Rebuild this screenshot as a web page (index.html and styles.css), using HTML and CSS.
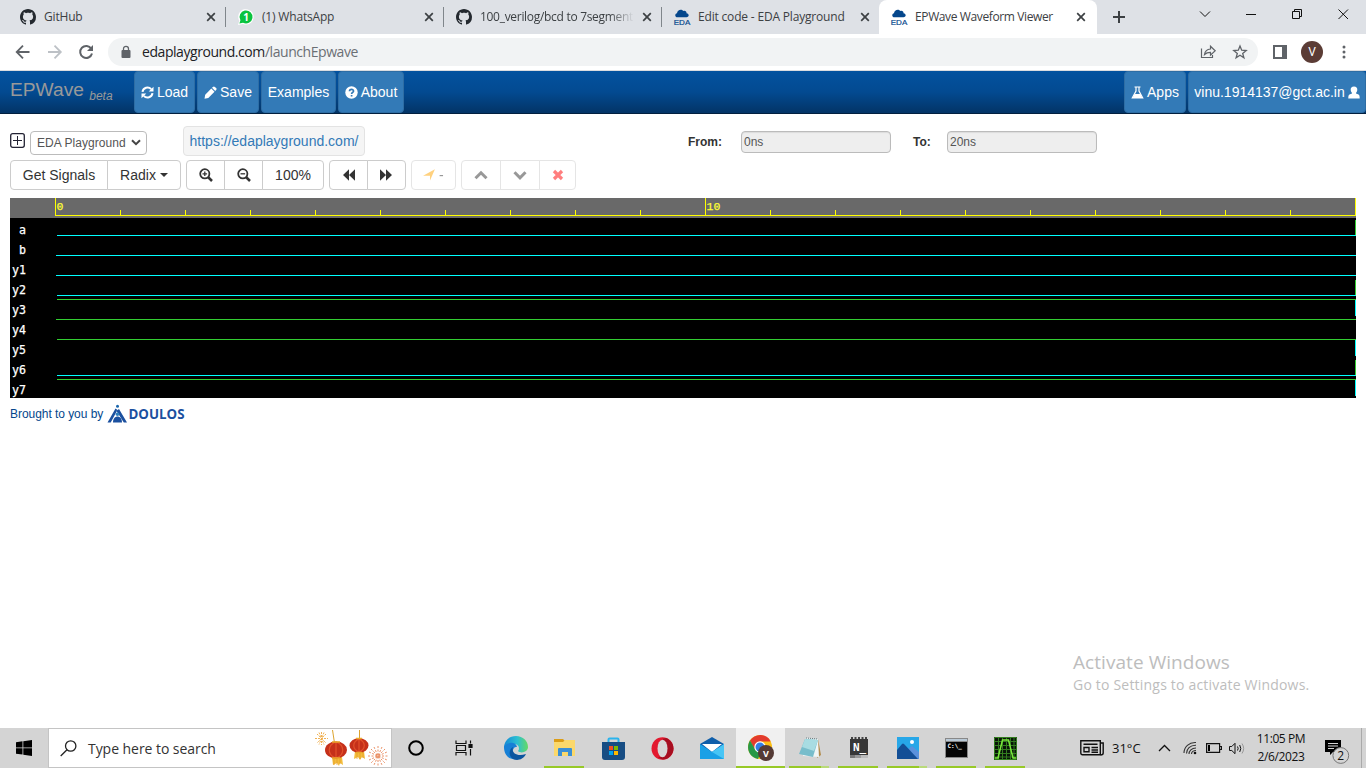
FILE: index.html
```html
<!DOCTYPE html>
<html lang="en">
<head>
<meta charset="utf-8">
<title>EPWave Waveform Viewer</title>
<link rel="stylesheet" href="styles.css">
</head>
<body>
<svg class="defs" width="0" height="0">
  <symbol id="github" viewBox="0 0 16 16"><path fill="#24292f" d="M8 0C3.58 0 0 3.58 0 8c0 3.54 2.29 6.53 5.47 7.59.4.07.55-.17.55-.38 0-.19-.01-.82-.01-1.49-2.01.37-2.53-.49-2.69-.94-.09-.23-.48-.94-.82-1.13-.28-.15-.68-.52-.01-.53.63-.01 1.08.58 1.23.82.72 1.21 1.87.87 2.33.66.07-.52.28-.87.51-1.07-1.78-.2-3.64-.89-3.64-3.95 0-.87.31-1.59.82-2.15-.08-.2-.36-1.02.08-2.12 0 0 .67-.21 2.2.82.64-.18 1.32-.27 2-.27.68 0 1.36.09 2 .27 1.53-1.04 2.2-.82 2.2-.82.44 1.1.16 1.92.08 2.12.51.56.82 1.27.82 2.15 0 3.07-1.87 3.75-3.65 3.95.29.25.54.73.54 1.48 0 1.07-.01 1.93-.01 2.2 0 .21.15.46.55.38A8.013 8.013 0 0016 8c0-4.42-3.58-8-8-8z"/></symbol>
  <symbol id="cloud" viewBox="0 0 16 16"><path fill="#05478c" d="M3.500 8.300C.8 8.300.4 4.800 3 4.200 3.300.9 7.400-.5 9.300 2c2.400-.7 3.400 1 3.200 2.200 3 .3 2.800 4.100 0 4.100z"/></symbol>
  <symbol id="x" viewBox="0 0 10 10"><path d="M1.200 1.200l7.600 7.600M8.800 1.200l-7.600 7.600" fill="none" stroke="#3c4043" stroke-width="1.700"/></symbol>
</svg>
<header class="browser">
  <div class="tabs">
    <div class="tab"><svg class="fav"><use href="#github"/></svg><span>GitHub</span><svg class="close"><use href="#x"/></svg></div>
    <div class="tab"><svg class="fav" viewBox="0 0 16 16"><path d="M0 16l1.300-4.200A7.700 7.700 0 1 1 5 15z" fill="#fff"/><path d="M1.400 14.600l1-3.400A6.500 6.500 0 1 1 5 13.700z" fill="#0ac33f"/><text x="8.100" y="11.800" text-anchor="middle" class="wa-num">1</text></svg><span>(1) WhatsApp</span><svg class="close"><use href="#x"/></svg></div>
    <div class="tab"><svg class="fav"><use href="#github"/></svg><span class="fade">100_verilog/bcd to 7segment</span><svg class="close"><use href="#x"/></svg></div>
    <div class="tab last"><svg class="fav"><use href="#cloud"/><text x="8" y="16" text-anchor="middle" class="eda-text">EDA</text></svg><span>Edit code - EDA Playground</span><svg class="close"><use href="#x"/></svg></div>
    <div class="tab active"><svg class="fav"><use href="#cloud"/><text x="8" y="16" text-anchor="middle" class="eda-text">EDA</text></svg><span>EPWave Waveform Viewer</span><svg class="close"><use href="#x"/></svg></div>
    <svg class="newtab" viewBox="0 0 12 12"><path d="M6 0v12M0 6h12" stroke="#3c4043" stroke-width="2"/></svg>
    <svg class="winctl" width="150" height="14" viewBox="0 0 150 14" fill="none" stroke="#111" stroke-width="1"><path d="M1 4.500l5 5 5-5M47 7.500h10M93.500 4.500h7v7h-7zM95.500 4.500v-2h7v7h-2M139.500 2.500l9.500 9.500M149 2.500L139.500 12"/></svg>
  </div>
  <div class="toolbar">
    <svg class="navicons" width="80" height="16" viewBox="0 0 80 16" fill="none" stroke-width="1.800"><path d="M14.500 8H2M8 1.700L1.700 8 8 14.300" stroke="#5f6368"/><path d="M33 8h12.500M39.500 1.700L45.800 8l-6.300 6.300" stroke="#bdc1c6"/><path d="M76.300 4.800A6 6 0 1 0 77 9.500" stroke="#5f6368" stroke-width="2"/><path d="M78 1v6h-6z" fill="#5f6368"/></svg>
    <div class="omnibox">
      <svg width="10" height="14" viewBox="0 0 10 14"><rect x=".5" y="5" width="9" height="8" rx="1" fill="#5f6368"/><path d="M2.500 5.500V3.800a2.500 2.500 0 0 1 5 0v1.700" fill="none" stroke="#5f6368" stroke-width="1.300"/></svg>
      <span class="url">edaplayground.com<i>/launchEpwave</i></span>
      <svg class="omni-end" width="48" height="16" viewBox="0 0 48 16" fill="none" stroke="#5f6368" stroke-width="1.300"><path d="M1.500 4.500v9h11V11M4.500 10.500c.5-3.500 2.500-5.300 6-5.500V2.200l4.700 4.600-4.700 4.400V8.300c-3 0-4.500.7-6 2.200z" stroke-width="1.200"/><path d="M40 2l1.700 4.200 4.500.3-3.500 2.900 1.200 4.400L40 11.300l-3.900 2.500 1.200-4.400-3.500-2.900 4.500-.3z"/></svg>
    </div>
    <svg class="panel" width="14" height="14" viewBox="0 0 14 14"><path fill="#5f6368" d="M0 0h14v14H0z"/><path fill="#fff" d="M2 2h7v10H2z"/></svg>
    <span class="avatar">V</span>
    <svg width="4" height="14" viewBox="0 0 4 14" fill="#5f6368"><circle cx="2" cy="2" r="1.500"/><circle cx="2" cy="7" r="1.500"/><circle cx="2" cy="12" r="1.500"/></svg>
  </div>
</header>
<nav class="appnav">
  <span class="brand">EPWave <em>beta</em></span>
  <button class="load"><svg width="13" height="13" viewBox="0 0 13 13" fill="none" stroke="#fff" stroke-width="2"><path d="M1.500 5.800a5 5 0 0 1 8.700-2.600M11.500 7.200a5 5 0 0 1-8.700 2.600"/><path d="M12.500.7v4.800H7.700zM.5 12.300V7.500h4.800z" fill="#fff" stroke="none"/></svg>Load</button>
  <button class="save"><svg width="13" height="13" viewBox="0 0 13 13" fill="#fff"><path d="M8.900.9c.7-.7 1.300-.7 2 0l1.200 1.200c.7.700.7 1.300 0 2l-.9.900-3.200-3.200zM7.300 2.500l3.200 3.200-6.200 6.200-3.800.8.700-3.900z"/></svg>Save</button>
  <button class="examples">Examples</button>
  <button class="about"><svg width="13" height="13" viewBox="0 0 13 13"><circle cx="6.500" cy="6.500" r="6.200" fill="#fff"/><path d="M4.500 5.200c0-2.700 4.200-2.400 4 0-.1 1.200-1.900 1.300-1.900 2.800M6.600 9v1.600" stroke="#337ab7" stroke-width="1.700" fill="none"/></svg>About</button>
  <button class="apps"><svg width="13" height="13" viewBox="0 0 13 13" fill="none" stroke="#fff" stroke-width="1.200"><path d="M3.500 1h6M5 1v4L1.300 11.800h10.400L8 5V1"/><path d="M3.500 8h6l2 4h-10z" fill="#fff" stroke="none"/></svg>Apps</button>
  <button class="user">vinu.1914137@gct.ac.in<svg width="12" height="13" viewBox="0 0 12 13" fill="#fff"><path d="M6 .5c2.300 0 3.500 1.500 3.300 3.500-.1 1.200-.7 2.200-1.300 2.900v.5l2.500 1c.9.400 1.200 1.300 1.200 4.100H.3c0-2.800.3-3.700 1.200-4.100l2.500-1v-.5C3.400 6.200 2.800 5.200 2.700 4 2.500 2 3.700.5 6 .5z"/></svg></button>
</nav>
<main class="page">
  <div class="source">
    <svg class="plus" width="15" height="15" viewBox="0 0 15 15" fill="none" stroke="#223"><rect x=".7" y=".7" width="13.600" height="13.600" rx="2" stroke-width="1.300"/><path d="M7.500 3v9M3 7.500h9"/></svg>
    <div class="select"><span>EDA Playground</span><svg width="10" height="7" viewBox="0 0 10 7"><path d="M1 1.200l4 4 4-4" fill="none" stroke="#444" stroke-width="2"/></svg></div>
    <a class="link">https://edaplayground.com/</a>
    <label class="from">From:</label><div class="field">0ns</div>
    <label class="to">To:</label><div class="field">20ns</div>
  </div>
  <div class="controls">
    <div class="group"><button class="w98">Get Signals</button><button class="w74">Radix<i class="caret"></i></button></div>
    <div class="group"><button class="w39"><svg width="14" height="14" viewBox="0 0 14 14" fill="none" stroke="#333" stroke-width="1.800"><circle cx="5.800" cy="5.800" r="4.600"/><path d="M9 9l4 4" stroke-width="2.500"/><path d="M5.800 3.500v4.600M3.500 5.800h4.600" stroke-width="1.300"/></svg></button><button class="w39"><svg width="14" height="14" viewBox="0 0 14 14" fill="none" stroke="#333" stroke-width="1.800"><circle cx="5.800" cy="5.800" r="4.600"/><path d="M9 9l4 4" stroke-width="2.500"/><path d="M3.500 5.800h4.600" stroke-width="1.300"/></svg></button><button class="w62">100%</button></div>
    <div class="group"><button class="w39"><svg width="12" height="12" viewBox="0 0 12 12" fill="#333"><path d="M6 .3v11.400L0 6zM12 .3v11.400L6 6z"/></svg></button><button class="w39 fwd"><svg width="12" height="12" viewBox="0 0 12 12" fill="#333"><path d="M0 .3v11.400L6 6zM6 .3v11.400L12 6z"/></svg></button></div>
    <div class="group dim"><button class="w45"><svg width="12" height="12" viewBox="0 0 12 12"><path fill="orange" d="M11.900.2L7 11.500V6.800H.1z"/></svg>&nbsp;-</button></div>
    <div class="group dim"><button class="w40"><svg width="14" height="12" viewBox="0 0 14 12"><path d="M1.500 9.300L7 3.800l5.500 5.500" fill="none" stroke="#333" stroke-width="3"/></svg></button><button class="w40"><svg width="14" height="12" viewBox="0 0 14 12"><path d="M1.500 3.300L7 8.800l5.500-5.500" fill="none" stroke="#333" stroke-width="3"/></svg></button><button class="w37"><svg width="12" height="12" viewBox="0 0 12 12"><path d="M2 2l8 8M10 2l-8 8" stroke="red" stroke-width="3.200"/></svg></button></div>
  </div>
  <section class="waves">
    <div class="row ruler"><span class="name"></span>
      <svg width="1301" height="20" viewBox="0 0 1301 20"><path class="tick" d="M.5 0v18M0 17.500h1301M650.500 0v17M1300.500 0v17M65.500 12v5M130.500 12v5M195.500 12v5M260.500 12v5M325.500 12v5M390.500 12v5M455.500 12v5M520.500 12v5M585.500 12v5M715.500 12v5M780.500 12v5M845.500 12v5M910.500 12v5M975.500 12v5M1040.500 12v5M1105.500 12v5M1170.500 12v5M1235.500 12v5"/><text x="1.500" y="12">0</text><text x="651.500" y="12">10</text></svg></div>
    <div class="row"><span class="name">a</span><svg width="1301" height="20"><path class="lo" d="M2 17.500h1299"/><path class="hi" d="M1300.500 2v15"/></svg></div>
    <div class="row"><span class="name">b</span><svg width="1301" height="20"><path class="lo" d="M1 17.500h1300"/></svg></div>
    <div class="row"><span class="name">y1</span><svg width="1301" height="20"><path class="lo" d="M1 17.500h1300"/></svg></div>
    <div class="row"><span class="name">y2</span><svg width="1301" height="20"><path class="lo" d="M2 17.500h1299"/><path class="hi" d="M1300.500 2v15"/></svg></div>
    <div class="row"><span class="name">y3</span><svg width="1301" height="20"><path class="hi" d="M2 1.500h1299"/><path class="lo" d="M1300.500 2v16"/></svg></div>
    <div class="row"><span class="name">y4</span><svg width="1301" height="20"><path class="hi" d="M1 1.500h1300"/></svg></div>
    <div class="row"><span class="name">y5</span><svg width="1301" height="20"><path class="hi" d="M2 1.500h1299"/><path class="lo" d="M1300.500 2v16"/></svg></div>
    <div class="row"><span class="name">y6</span><svg width="1301" height="20"><path class="lo" d="M2 17.500h1299"/><path class="hi" d="M1300.500 2v15"/></svg></div>
    <div class="row"><span class="name">y7</span><svg width="1301" height="20"><path class="hi" d="M2 1.500h1299"/><path class="lo" d="M1300.500 2v16"/></svg></div>
  </section>
  <footer class="credit"><span>Brought to you by</span><svg width="80" height="20" viewBox="0 0 80 20"><path fill="#1b509f" d="M8.500 4.500L.5 18.500h3.200L10.500 6zM12 5l8 13.500h-3.200L9.500 7z"/><circle cx="10.500" cy="2.300" r="1.500" fill="#1b67ad"/><circle cx="10.500" cy="10.300" r="1.800" fill="#2d7fbd"/><path fill="#1b509f" d="M6 18.500c0-8 9-8 9 0z"/><text x="21.500" y="15" class="doulos" textLength="56" lengthAdjust="spacingAndGlyphs">DOULOS</text></svg></footer>
</main>
<aside class="watermark"><p class="wm1">Activate Windows</p><p class="wm2">Go to Settings to activate Windows.</p></aside>
<div class="taskbar">
  <div class="start"><svg width="16" height="16" viewBox="0 0 16 16"><path d="M0 2.200l6.500-.9v6.200H0zM7.300 1.200L16 0v7.500H7.300zM0 8.300h6.500v6.300L0 13.700zM7.300 8.300H16V16l-8.700-1.200z"/></svg></div>
  <div class="search">
    <svg width="17" height="17" viewBox="0 0 17 17" fill="none" stroke="#222" stroke-width="1.300"><circle cx="10.700" cy="6" r="5.200"/><path d="M7 9.700L.7 16"/></svg><span>Type here to search</span>
    <svg class="lanterns" width="74" height="37" viewBox="0 0 74 37">
      <g stroke="#eea943" stroke-width=".9" stroke-dasharray="2 1"><path d="M6.500 2v13M0 8.500h13M2 4l9 9M11 4l-9 9M4 2.500l5 12M9 2.500l-5 12"/></g>
      <g stroke="#e88657" stroke-width=".9" stroke-dasharray="2 1.500"><path d="M63 16v20M53 26h20M56 19l14 14M70 19L56 33M59 17l8 18M67 17l-8 18M54 22l18 8M54 30l18-8"/></g>
      <path d="M17.500 0l2 13M44.500 0v8" stroke="#dca32e"/>
      <path d="M17 27h10l1 8-3-2-1 3-2-3-4 2zM40 21h9l1 8-3-2-2 3-2-3-4 2z" fill="#f3bd3c"/>
      <path d="M19 27v8M22 27v8M25 27v7M42 22v7M45 22v7M48 22v6" stroke="#e49a25" stroke-width=".7"/>
      <ellipse cx="21" cy="20" rx="11" ry="8.500" fill="#c5301a"/><ellipse cx="44" cy="15.500" rx="9.500" ry="7.300" fill="#c5301a"/>
      <path d="M21 12c-9 3-9 13 0 16M21 12c9 3 9 13 0 16M21 12v16M44 9c-7 3-7 10 0 13M44 9c7 3 7 10 0 13M44 9v13" fill="none" stroke="#e2502a" stroke-width="1.200"/>
      <path d="M17 12h8M41 8.500h6M17 28h8M41 22.500h6" stroke="#eaa82c" stroke-width="1.500"/>
    </svg>
  </div>
  <div class="tool"><svg width="16" height="16" viewBox="0 0 16 16"><circle cx="8" cy="8" r="6.800" fill="none" stroke="#000" stroke-width="2"/></svg></div>
  <div class="tool second"><svg width="18" height="16" viewBox="0 0 18 16" fill="none" stroke="#111" stroke-width="1.200"><path d="M1 .5v3h10v-3M1 15.500v-3h10v3M1.500 5.500h9v5h-9zM15.500.5v3M15.500 9v6.500"/><path d="M14 4.500h3v3h-3z" fill="#111"/></svg></div>
  <div class="task"><svg width="24" height="24" viewBox="0 0 24 24"><defs><linearGradient id="eg"><stop stop-color="#1489d5"/><stop offset=".55" stop-color="#2cbfd2"/><stop offset="1" stop-color="#65da63"/></linearGradient></defs><path fill="url(#eg)" d="M0 12C0 5 5 0 12 0c7 0 12 5 12 11 0 5-7 7-10 4 2-2 1-7-4-7-5 0-9 3-10 4z"/><path fill="#1780d6" d="M0 11c2-5 12-6 13 0-4-1-7 6-1 12C5 24 0 19 0 11z"/><path fill="#0c559f" d="M9 11c-2 6 4 10 13 7-3 6-9 7-13 5-5-3-4-10 0-12z"/></svg></div>
  <div class="task open"><svg width="22" height="20" viewBox="0 0 22 20"><path fill="#dc9d16" d="M0 1h9l2 2v4H0z"/><path fill="#fbd86b" d="M0 4h9l2-2h10v16H0z"/><path fill="#3b8fd5" d="M4 18v-7q0-1 1-1h12q1 0 1 1v7h-4v-4H8v4z"/></svg></div>
  <div class="task"><svg width="23" height="23" viewBox="0 0 23 23"><path d="M6.500 6V2.500q0-1 1-1h8q1 0 1 1V6" fill="none" stroke="#2bb4ed" stroke-width="2"/><path fill="#174d83" d="M0 5h23v15q0 3-3 3H3q-3 0-3-3z"/><path fill="#f25022" d="M7 9h4v4H7z"/><path fill="#7fba00" d="M12 9h4v4h-4z"/><path fill="#00a4ef" d="M7 14h4v4H7z"/><path fill="#ffb900" d="M12 14h4v4h-4z"/></svg></div>
  <div class="task"><svg width="23" height="23" viewBox="0 0 23 23"><ellipse cx="11.500" cy="11.500" rx="11" ry="11.300" fill="#e3192f"/><path fill="#a70e20" d="M15 1c10 4 10 17 0 21-3 1-6 0-8-2 12 1 10-15 4-18z"/><ellipse cx="11.500" cy="11.500" rx="5" ry="8.800" fill="#d8d6d6"/></svg></div>
  <div class="task"><svg width="24" height="22" viewBox="0 0 24 22"><path fill="#0f5eaa" d="M0 7l12-7 12 7v8H0z"/><path fill="#fff" d="M2 7h20l-10 8z"/><path fill="#1aa0e6" d="M0 7l12 8 12-8v15H0z"/><path fill="#47c5f5" d="M12 15L24 7v15z"/></svg></div>
  <div class="task open current"><svg width="26" height="26" viewBox="0 0 26 26"><circle cx="12" cy="12" r="12" fill="#fbbf16"/><path fill="#e33b2e" d="M2 5.500C7-2 19-2 22.600 6.500H12L7 15z"/><path fill="#279847" d="M2 5.500L7.500 15l5 3-2.500 6C0 22-2 12 2 5.500z"/><circle cx="12" cy="12" r="5.700" fill="#fff"/><circle cx="12" cy="12" r="4.500" fill="#337de5"/><circle cx="18" cy="18" r="8" fill="#543a35"/><text x="18" y="21.500" text-anchor="middle" class="badge-v">V</text></svg></div>
  <div class="task open stack"><svg width="24" height="22" viewBox="0 0 24 22"><path fill="#b18b4c" d="M20 2l3 16-4 3z"/><path fill="#eff5f5" d="M8 1l12 1 1 18-16-1z"/><path fill="#78bdcb" d="M7 2l13 1-5 17-14-3z"/><path fill="#a8dce2" d="M7 2l13 1-4 11L4 10z"/><path stroke="#64777c" stroke-dasharray="1 1" d="M8 1l12 1"/></svg></div>
  <div class="task open"><svg width="18" height="22" viewBox="0 0 18 22"><path fill="#373737" d="M0 2h18v16H0z"/><path d="M1 1h16" stroke="#444" stroke-width="2" stroke-dasharray="2 1.500"/><path fill="#777" d="M0 18h5v3H0z"/><path fill="#999" d="M5 18h6v3H5z"/><path fill="#bbb" d="M11 18h7v3h-7z"/><text x="3" y="14" class="n-text">N_</text></svg></div>
  <div class="task open stack"><svg width="22" height="22" viewBox="0 0 22 22"><path fill="#27a7e8" d="M0 0h22v22H0z"/><path fill="#5a91dc" d="M10 13l5-4 7 6v7H10z"/><path fill="#134f96" d="M0 13l5-6q1-1 2 0l14 15H0z"/><circle cx="15" cy="5" r="2" fill="#fff"/></svg></div>
  <div class="task open"><svg width="23" height="20" viewBox="0 0 23 20"><path fill="#888" d="M0 0h23v20H0z"/><path fill="#b9c9d6" d="M1 1h21v2H1z"/><path fill="#050505" d="M1 4h21v15H1z"/><text x="2.500" y="10" class="cmd">C:\_</text></svg></div>
  <div class="task open"><svg width="23" height="23" viewBox="0 0 23 23"><path fill="#081508" d="M0 0h23v23H0z"/><path d="M.5.5h22v22H.5zM4.500 0v23M8.500 0v23M12.500 0v23M16.500 0v23M20 0v23M0 4.500h23M0 8.500h23M0 12.500h23M0 16.500h23M0 20h23" stroke="#327d1e" fill="none"/><path d="M1 21h3L8.500 3h6L19 21h3" fill="none" stroke="#79e83c" stroke-width="1.500"/></svg></div>
  <div class="tray">
    <svg class="news" width="24" height="16" viewBox="0 0 24 16" fill="none" stroke="#111" stroke-width="1.400"><path d="M.8.8h19.500v14H2.500q-1.700 0-1.700-1.700zM20.500 3h2.700v10q0 2-2.700 2M3.500 4.300h14M11.500 7.500H18M11.500 10H18M11.500 12.300H18M4 7.500h5v4.300H4z"/></svg>
    <span class="temp">31°C</span>
    <svg class="up" width="13" height="8" viewBox="0 0 13 8"><path d="M1 7l5.500-5.500L12 7" fill="none" stroke="#111" stroke-width="1.300"/></svg>
    <svg class="wifi" width="14" height="14" viewBox="0 0 14 14" fill="none" stroke="#333"><path d="M1 12C1 6 6 1 13 1.500M3.500 12.500C3.500 8 7 4 13 4.200M6 13c0-3 2.500-6 7-6M8.500 13c0-2 2-3.500 4.500-3.500" stroke-width="1.100"/><circle cx="12" cy="12" r="1.300" fill="#111" stroke="none"/></svg>
    <svg class="battery" width="16" height="10" viewBox="0 0 16 10"><path d="M.6.600h13v8.800H.6zM14 3.500h1.500v3H14" fill="none" stroke="#111" stroke-width="1.200"/><path d="M2 2h2v6H2z"/></svg>
    <svg class="vol" width="17" height="13" viewBox="0 0 17 13" fill="none" stroke="#111"><path d="M.5 4.500h2.300L6 1.300v10.400L2.800 8.500H.5zM8.500 4.500q1.300 2 0 4M10.700 3q2.200 3.500 0 7"/><path d="M13 1.500q3.300 5 0 10" stroke="#999"/></svg>
    <div class="clock"><span>11:05 PM</span><span>2/6/2023</span></div>
    <svg class="action" width="25" height="26" viewBox="0 0 25 26"><path d="M0 1h16v12H8l-3 3v-3H0z"/><path d="M3 4.500h10M3 7h10M3 9.500h6" stroke="#d4d4d4"/><circle cx="15.800" cy="16.500" r="7.900" fill="#d4d4d4" stroke="#777"/><text x="15.800" y="20.800" text-anchor="middle" class="count">2</text></svg>
    <i class="desk"></i>
  </div>
</div>
</body>
</html>
```

FILE: styles.css
```css
* { box-sizing: border-box; }
body { margin: 0; width: 1366px; height: 768px; overflow: hidden; display: flex; flex-direction: column; background: #fff; color: #333; font: 14px/20px "Liberation Sans", sans-serif; }
svg { flex: none; display: block; }
.defs { position: absolute; }
button { font: inherit; padding: 0; margin: 0; display: flex; align-items: center; justify-content: center; white-space: nowrap; }

.browser { font-family: "Open Sans", sans-serif; }
.tabs { height: 34px; background: #dee1e6; padding-left: 8px; display: flex; align-items: center; }
.tab { width: 218px; height: 34px; padding: 0 10px 0 12px; display: flex; align-items: center; font-size: 12px; letter-spacing: -.18px; color: #3c4043; background: linear-gradient(#80868b, #80868b) right 7px / 1px 20px no-repeat; }
.tab:nth-child(3) { letter-spacing: -.3px; }
.tab.last { width: 217px; padding-right: 9px; background: none; }
.tab.active { padding-right: 11px; letter-spacing: -.38px; background: #fff; border-radius: 8px 8px 0 0; }
.fav { width: 16px; height: 16px; margin-right: 8px; overflow: visible; }
.tab span { flex: 1; white-space: nowrap; }
.fade { -webkit-mask: linear-gradient(90deg, #000 84%, transparent); mask: linear-gradient(90deg, #000 84%, transparent); }
.close { width: 10px; height: 10px; margin-left: 8px; }
.eda-text { font: 8px "Liberation Sans", sans-serif; letter-spacing: 0; fill: #05478c; stroke: #05478c; stroke-width: .2px; }
.wa-num { font: bold 10px "Open Sans", sans-serif; fill: #fff; }
.newtab { width: 12px; height: 12px; margin-left: 16px; }
.winctl { margin: -6px 0 0 74px; }
.toolbar { height: 37px; border-bottom: 1px solid #dadce0; display: flex; align-items: center; padding-left: 14px; }
.navicons { position: relative; left: 1px; }
.omnibox { width: 1150px; height: 28px; margin-left: 14px; border-radius: 14px; background: #f1f3f4; display: flex; align-items: center; padding-left: 13px; }
.url { margin-left: 11px; font-size: 14px; letter-spacing: -.44px; color: #202124; }
.url i { font-style: normal; color: #6b6f74; }
.omni-end { margin: 0 10px 0 auto; }
.panel { margin-left: 15px; }
.avatar { width: 22px; height: 22px; margin: 0 19px 0 14px; border-radius: 50%; background: #5b3c35; color: #fff; font: 12px/22px Roboto, sans-serif; text-align: center; }

.appnav { height: 43px; display: flex; background: linear-gradient(#03529f, #034a91 50%, #033466); border-bottom: 1px solid #02203f; }
.brand { width: 124px; margin-left: 10px; padding-top: 9px; font-size: 19.200px; color: #999; white-space: nowrap; }
.brand em { font-size: 12px; position: relative; top: 4px; }
.appnav button { height: 42px; border: 1px solid #2e6da4; border-radius: 4px; background: #337ab7; color: #fff; margin-right: 2px; gap: 3px; }
.load { width: 61px; } .save { width: 62px; } .examples { width: 75px; } .about { width: 66px; }
.appnav .apps { width: 62px; margin-left: auto; }
.appnav .user { width: 178px; margin-right: 0; }

.page { padding: 12px 10px 0; }
.source { height: 30px; display: flex; align-items: center; font-size: 12px; }
.plus { margin-top: -1px; }
.select { width: 117px; height: 24px; margin: 3px 0 0 5px; padding: 0 5px 0 6px; border: 1px solid #bbb; border-radius: 4px; color: #555; display: flex; align-items: center; justify-content: space-between; letter-spacing: .05px; }
.link { width: 182px; height: 30px; margin-left: 36px; border: 1px solid #e3e3e3; border-radius: 4px; background: #f5f5f5; color: #337ab7; font-size: 14px; line-height: 28px; text-align: center; }
.source label { font-weight: bold; padding-top: 1px; }
.from { width: 53px; margin-left: 323px; }
.to { width: 34px; margin-left: 22px; }
.field { width: 150px; height: 22px; margin-top: 2px; padding-left: 2px; border: 1px solid #bbb; border-radius: 4px; background: #eee; color: #555; line-height: 20px; box-shadow: inset 0 1px 1px rgba(0,0,0,.08); }
.controls { margin-top: 4px; display: flex; gap: 5px; }
.group { display: flex; }
.group button { height: 30px; border: 1px solid #ccc; background: #fff; color: #333; margin-left: -1px; }
.group button:first-child { margin-left: 0; border-radius: 4px 0 0 4px; }
.group button:last-child { border-radius: 0 4px 4px 0; }
.group button:only-child { border-radius: 4px; }
.group .fwd { padding-right: 1px; }
.dim { opacity: .5; }
.w98 { width: 98px; } .w74 { width: 74px; } .w39 { width: 39px; } .w62 { width: 62px; } .w45 { width: 45px; } .w40 { width: 40px; } .w37 { width: 37px; }
.caret { border: 4px solid transparent; border-top-color: #333; border-bottom: 0; margin-left: 4px; }

.waves { width: 1346px; margin-top: 8px; background: #000; }
.row { height: 20px; display: flex; }
.ruler { background: #696969; }
.ruler text { font: 11.500px "Liberation Mono", monospace; fill: #ff3; stroke: #ff3; stroke-width: .25px; }
.name { width: 45px; padding-right: 29px; text-align: right; color: #fff; font: 11.600px/24px "DejaVu Sans Mono", monospace; -webkit-text-stroke: .25px #fff; }
.tick { stroke: #ff0; } .lo { stroke: #0ff; } .hi { stroke: #32cd32; }
.credit { display: flex; align-items: center; margin-top: 6px; font-size: 12px; letter-spacing: -.05px; color: #05478c; }
.credit svg { margin-left: 4px; }
.doulos { font: bold 14px "Open Sans", sans-serif; letter-spacing: 0; fill: #1b509f; }

.watermark { position: absolute; left: 1073px; top: 650px; font-family: "Open Sans", sans-serif; color: #bdbdbd; white-space: nowrap; }
.watermark p { margin: 0; }
.wm1 { font-size: 19px; line-height: 24px; letter-spacing: .06px; }
.wm2 { font-size: 14px; line-height: 22px; letter-spacing: .2px; }

.taskbar { margin-top: auto; height: 40px; background: #d4d4d4; display: flex; font-family: "Open Sans", sans-serif; color: #111; }
.start { width: 48px; display: flex; align-items: center; justify-content: center; }
.search { width: 344px; border: 1px solid #c4c4c4; background: #fff; display: flex; align-items: center; padding-left: 11px; font-size: 14px; letter-spacing: -.05px; color: #333; }
.search span { margin-left: 11px; padding-top: 1px; white-space: nowrap; }
.lanterns { margin: 0 2px 0 auto; }
.tool { width: 48px; display: flex; align-items: center; justify-content: center; }
.tool.second { width: 51px; padding-right: 4px; }
.task { width: 49px; display: flex; align-items: center; justify-content: center; }
.open { background: linear-gradient(#97c927, #97c927) 4px bottom / 40px 2px no-repeat; }
.stack { background: linear-gradient(90deg, #97c927 80%, #b9da7a 80%) 4px bottom / 40px 2px no-repeat; }
.current { background: linear-gradient(#97c927, #97c927) bottom / 100% 2px no-repeat, #f0f0f0; }
.badge-v { font: bold 9px "Open Sans", sans-serif; fill: #fff; }
.n-text { font: bold 11px "DejaVu Sans Mono", monospace; fill: #fff; }
.cmd { font: bold 6px "DejaVu Sans Mono", monospace; fill: #fff; }
.tray { flex: 1; display: flex; align-items: center; padding-left: 50px; }
.temp { width: 29px; margin-left: 8px; font-size: 13px; white-space: nowrap; }
.up { margin-left: 17px; } .wifi { margin-left: 12px; } .battery { margin-left: 9px; } .vol { margin-left: 7px; }
.clock { width: 50px; margin-left: 10px; display: flex; flex-direction: column; align-items: center; font-size: 12px; line-height: 18px; white-space: nowrap; letter-spacing: -.4px; }
.action { margin: 7px 0 0 19px; }
.count { font: 12px "Open Sans", sans-serif; fill: #111; }
.desk { width: 1px; height: 40px; margin-left: 11px; background: #aaa; }
```
